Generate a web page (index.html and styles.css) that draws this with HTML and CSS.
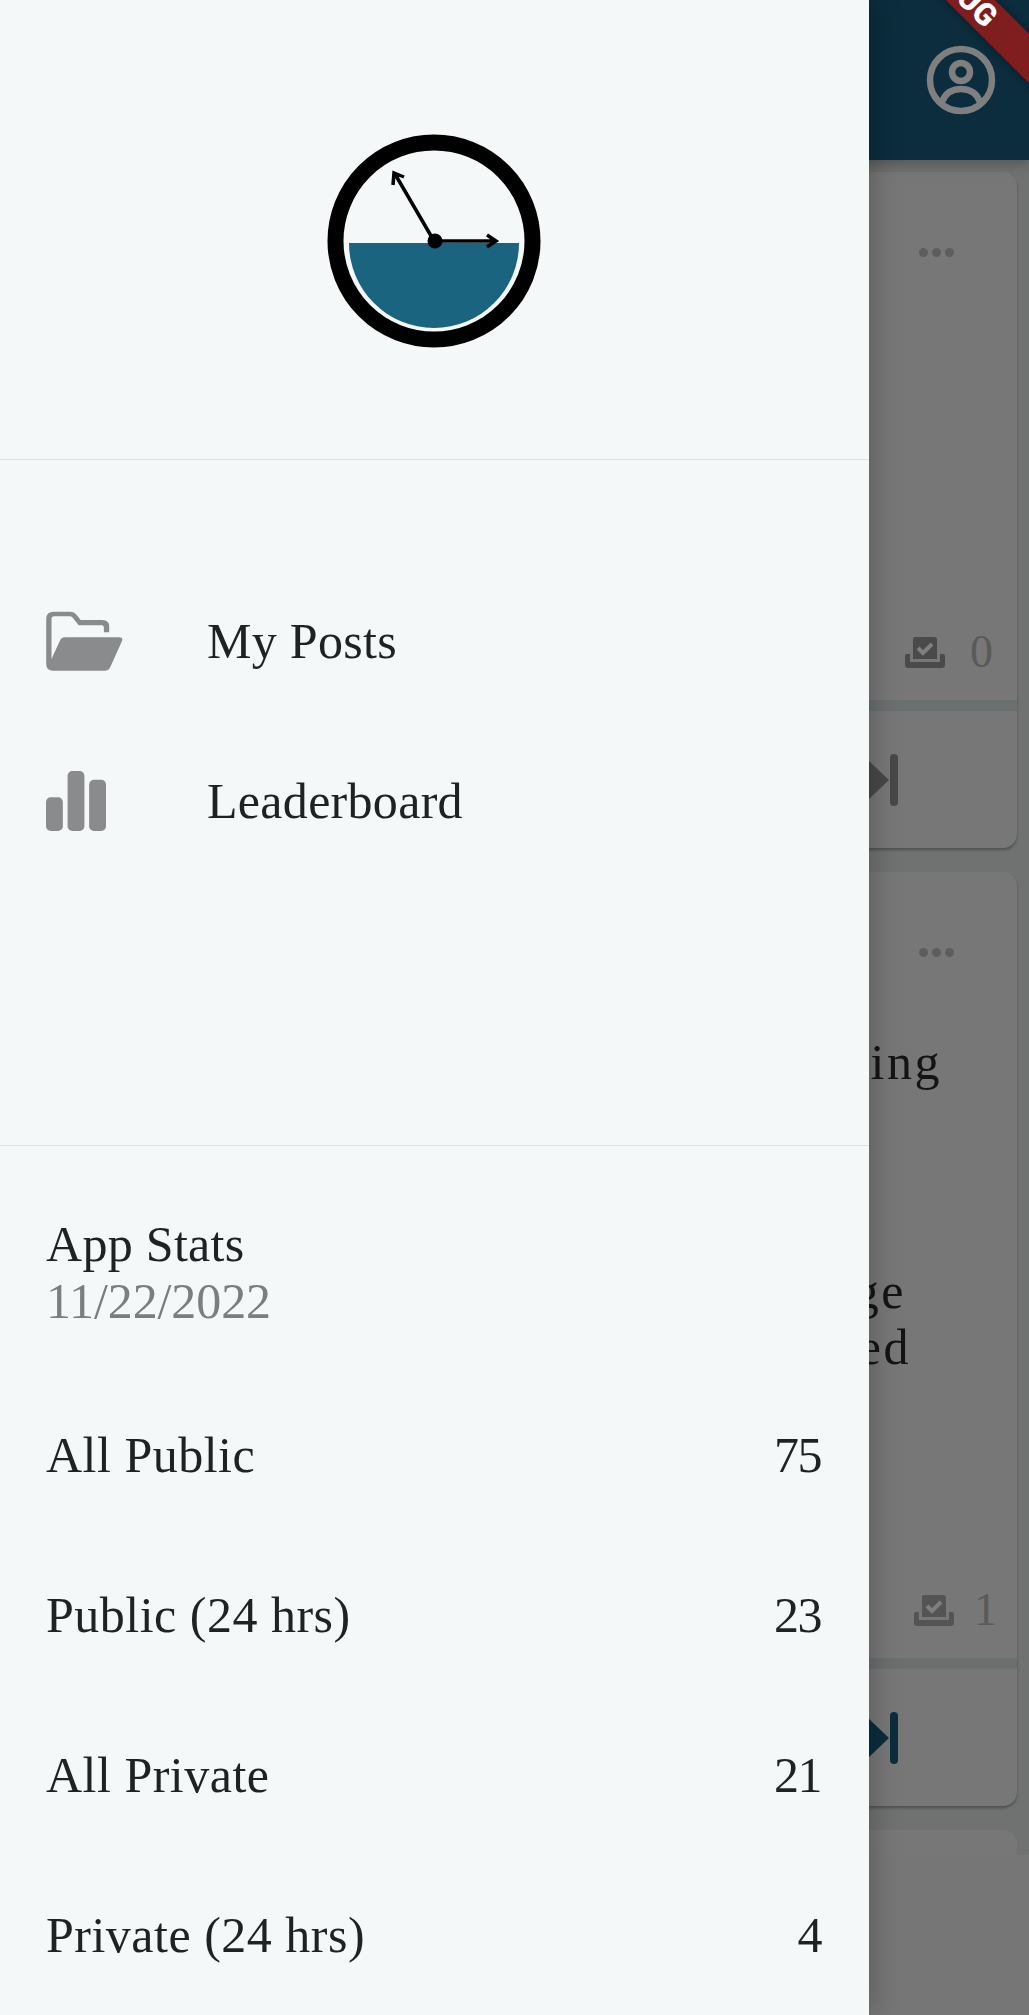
FILE: index.html
```html
<!DOCTYPE html>
<html>
	<head>
		<meta charset="utf-8">
		<title>Posts</title>
		<link rel="stylesheet" href="styles.css">
	</head>
	<body>
		<div class="page">
			<header class="app-bar">
				<svg class="account-icon" width="80" height="80" viewBox="0 0 80 80">
					<circle cx="40" cy="40" r="31" fill="none" stroke="#fff" stroke-width="6.5"/>
					<circle cx="40" cy="32" r="9" fill="none" stroke="#fff" stroke-width="6.5"/>
					<path d="M21 62 C25 51 33 49 40 49 C47 49 55 51 59 62" fill="none" stroke="#fff" stroke-width="6.5"/>
				</svg>
			</header>
			<div class="feed">
				<div class="card">
					<div class="card-body card-body-first">
						<div class="more"><i></i><i></i><i></i></div>
						<div class="card-foot">
							<svg class="inbox-icon" width="40" height="31" viewBox="0 0 40 31">
								<path d="M10 0 H29 Q32 0 32 3 V22 H8 V2 Q8 0 10 0 Z" fill="#949494"/>
								<path d="M0 19 Q0 17 2 17 H5 V25 H35 V17 H38 Q40 17 40 19 V28 Q40 31 37 31 H3 Q0 31 0 28 Z" fill="#949494"/>
								<path d="M13 11 L18 16 L27 7" fill="none" stroke="#fff" stroke-width="4"/>
							</svg>
							<span class="count count-zero">0</span>
						</div>
					</div>
					<div class="card-actions">
						<svg class="skip-icon" width="30" height="52" viewBox="0 0 30 52">
							<path d="M0 6 L21 26 L0 46 Z" fill="#909090"/>
							<rect x="22" y="0" width="8" height="52" rx="4" fill="#909090"/>
						</svg>
					</div>
				</div>
				<div class="card">
					<div class="card-body card-body-second">
						<div class="more"><i></i><i></i><i></i></div>
						<div class="tail tail-ing">ing</div>
						<div class="tail tail-ge">ge</div>
						<div class="tail tail-ed">ed</div>
						<div class="card-foot">
							<svg class="inbox-icon" width="40" height="31" viewBox="0 0 40 31">
								<path d="M10 0 H29 Q32 0 32 3 V22 H8 V2 Q8 0 10 0 Z" fill="#a8a8a8"/>
								<path d="M0 19 Q0 17 2 17 H5 V25 H35 V17 H38 Q40 17 40 19 V28 Q40 31 37 31 H3 Q0 31 0 28 Z" fill="#a8a8a8"/>
								<path d="M13 11 L18 16 L27 7" fill="none" stroke="#fff" stroke-width="4"/>
							</svg>
							<span class="count count-one">1</span>
						</div>
					</div>
					<div class="card-actions">
						<svg class="skip-icon" width="30" height="52" viewBox="0 0 30 52">
							<path d="M0 6 L21 26 L0 46 Z" fill="#165b7b"/>
							<rect x="22" y="0" width="8" height="52" rx="4" fill="#165b7b"/>
						</svg>
					</div>
				</div>
				<div class="card card-cut"></div>
			</div>
			<div class="bottom-bar"></div>
		</div>

		<div class="scrim"></div>

		<aside class="drawer">
			<div class="drawer-head">
				<svg width="240" height="240" viewBox="5 0 240 240">
					<path d="M39 123 H209 A85 85 0 0 1 39 123 Z" fill="#1a6480"/>
					<circle cx="124" cy="121" r="98.5" fill="none" stroke="#000" stroke-width="16"/>
					<path d="M124 121 L85 54 M83 65 L84 53 L94 57" fill="none" stroke="#000" stroke-width="3.5"/>
					<path d="M124 121 H186 M177 115 L186 121 L177 127" fill="none" stroke="#000" stroke-width="3.5"/>
					<circle cx="125" cy="121" r="7.5" fill="#000"/>
				</svg>
			</div>
			<nav class="drawer-nav">
				<div class="nav-row">
					<span class="nav-icon">
						<svg width="77" height="60" viewBox="48 60 231 181">
							<path d="M70 62 H122 Q132 62 140 72 L152 87 H218 Q238 87 238 107 V124 H222 V110 Q222 103 215 103 H146 L128 80 Q124 76 118 76 H72 Q64 76 64 84 V205 L90 148 Q94 139 104 139 H268 Q282 139 276 152 L240 232 Q236 240 226 240 H68 Q48 240 48 220 V84 Q48 62 70 62 Z" fill="#8a8b8d"/>
						</svg>
					</span>
					My Posts
				</div>
				<div class="nav-row">
					<span class="nav-icon">
						<svg width="60" height="60" viewBox="48 542 178 178">
							<rect x="48" y="620" width="50" height="100" rx="14" fill="#8a8b8d"/>
							<rect x="112" y="542" width="50" height="178" rx="14" fill="#8a8b8d"/>
							<rect x="176" y="568" width="50" height="152" rx="14" fill="#8a8b8d"/>
						</svg>
					</span>
					Leaderboard
				</div>
			</nav>
			<section class="stats">
				<div class="stats-title">App Stats</div>
				<div class="stats-date">11/22/2022</div>
				<div class="stat-row"><span>All Public</span><span class="stat-value">75</span></div>
				<div class="stat-row"><span>Public (24 hrs)</span><span class="stat-value">23</span></div>
				<div class="stat-row"><span>All Private</span><span class="stat-value">21</span></div>
				<div class="stat-row"><span>Private (24 hrs)</span><span class="stat-value">4</span></div>
			</section>
		</aside>

		<div class="debug-banner">DEBUG</div>
	</body>
</html>
```
FILE: styles.css
```css
html,body{
	margin: 0;
	padding: 0;
}
body{
	position: relative;
	width: 1029px;
	height: 2015px;
	overflow: hidden;
	font-family: "Liberation Serif", serif;
	font-size: 50px;
	color: #1f2224;
}
.page{
	display: flex;
	flex-direction: column;
	height: 2015px;
	background: #dee4e2;
}
.app-bar{
	flex: none;
	height: 160px;
	background: #165b7b;
	display: flex;
	justify-content: flex-end;
	align-items: center;
	padding-right: 28px;
	box-shadow: 0 4px 12px rgba(0,0,0,.25);
	position: relative;
}
.feed{
	flex: 1;
	overflow: hidden;
	padding: 12px 12px 0;
}
.bottom-bar{
	flex: none;
	height: 160px;
	background: #ededed;
}
.card{
	margin-bottom: 24px;
	border-radius: 14px;
	background: #eee;
	box-shadow: 0 2px 3px rgba(0,0,0,.3);
}
.card-cut{
	height: 60px;
	box-shadow: none;
}
.card-body{
	display: flex;
	flex-direction: column;
	box-sizing: border-box;
	border-bottom: 11px solid #d4dee0;
}
.card-body-first{
	height: 539px;
}
.card-body-second{
	height: 797px;
}
.more{
	display: flex;
	justify-content: flex-end;
	gap: 4px;
	padding: 76px 63px 0 0;
}
.more i{
	width: 9px;
	height: 9px;
	border-radius: 50%;
	background: #bbb;
}
.card-foot{
	margin-top: auto;
	display: flex;
	justify-content: flex-end;
	align-items: center;
	padding-bottom: 28px;
}
.card-foot .inbox-icon{
	flex: none;
}
.count{
	font-size: 46px;
	line-height: 40px;
	color: #b4b4b4;
}
.count-zero{
	margin: 0 24px 0 25px;
}
.count-one{
	margin: 0 20px 0 20px;
}
.tail{
	line-height: 58px;
	text-align: right;
	letter-spacing: 2.5px;
	color: #282828;
}
.tail-ing{
	padding: 76px 75px 0 0;
}
.tail-ge{
	padding: 171px 111px 0 0;
}
.tail-ed{
	margin-top: -2px;
	padding-right: 106px;
}
.card-actions{
	display: flex;
	justify-content: flex-end;
	align-items: center;
	height: 137px;
	padding-right: 119px;
}
.scrim{
	position: absolute;
	left: 0;
	top: 0;
	width: 100%;
	height: 100%;
	background: rgba(0,0,0,.5);
}
.drawer{
	position: absolute;
	left: 0;
	top: 0;
	width: 869px;
	height: 2015px;
	display: flex;
	flex-direction: column;
	background: #f5f8f9;
	box-shadow: 0 0 30px rgba(0,0,0,.28);
}
.drawer-head{
	flex: none;
	height: 459px;
	border-bottom: 1px solid #dfe3e5;
	display: flex;
	justify-content: center;
}
.drawer-head svg{
	margin-top: 120px;
}
.drawer-nav{
	flex: none;
	height: 585px;
	padding-top: 100px;
	border-bottom: 1px solid #dfe3e5;
}
.nav-row{
	display: flex;
	align-items: center;
	box-sizing: border-box;
	height: 160px;
	padding-top: 1px;
	letter-spacing: .3px;
}
.nav-icon{
	flex: none;
	display: flex;
	width: 207px;
	padding-left: 46px;
	box-sizing: border-box;
}
.stats{
	padding: 70px 48px 0 46px;
}
.stats-title,.stats-date{
	line-height: 57px;
	letter-spacing: .3px;
}
.stats-date{
	letter-spacing: -.1px;
	color: #7a7e80;
}
.stat-row{
	display: flex;
	justify-content: space-between;
	align-items: center;
	box-sizing: border-box;
	height: 160px;
	padding-top: 1px;
	letter-spacing: .5px;
}
.stat-value{
	letter-spacing: -1.5px;
}
.stats-date + .stat-row{
	margin-top: 44px;
}
.debug-banner{
	position: absolute;
	left: 757px;
	top: -31px;
	width: 400px;
	height: 35px;
	line-height: 35px;
	text-align: center;
	transform: rotate(45deg);
	background: #7f1d1f;
	color: #fff;
	font-family: Roboto, sans-serif;
	font-weight: 900;
	font-size: 31px;
	box-shadow: 0 0 8px rgba(0,0,0,.4);
}
```
